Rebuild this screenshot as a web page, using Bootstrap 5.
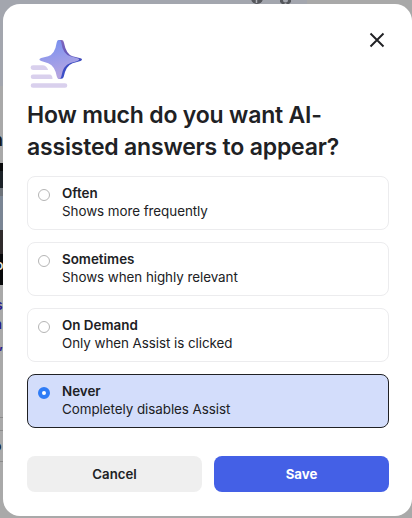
<!DOCTYPE html>
<html lang="en">
<head>
<meta charset="utf-8">
<meta name="viewport" content="width=device-width, initial-scale=1">
<title>AI-assisted answers</title>
<link href="https://cdn.jsdelivr.net/npm/bootstrap@5.3.0/dist/css/bootstrap.min.css" rel="stylesheet">
<style>
body{width:412px;height:518px;overflow:hidden;background:#a9a9a9;color:#202124;font-family:Inter,"Liberation Sans",sans-serif}
.page-behind{inset:0;z-index:0}
.dialog-panel{width:409px;height:512px;margin:4px 0 0 3px;padding:36px 23px 24px 24px;border-radius:17px;z-index:1}
.panel-head{height:60px}
.spark{width:56px;height:52px;display:block}
.close-btn{width:16px;height:16px;margin:-8px 4px 0 0;line-height:0}
.ask{font-size:23px;line-height:32px;font-weight:600;margin:-1px 0 13px;color:#202124;letter-spacing:-.19px}
.ask span{display:block;white-space:nowrap}
.options{gap:12px}
.option{height:54px;border:1px solid #ececee;border-radius:8px;padding:7px 10px;gap:12px}
.option.chosen{background:#d3ddfb;border-color:#202124}
.option .form-check-input{width:12px;height:12px;margin:5px 0 0;border:1px solid #b5b5b5;background-image:none;box-shadow:none;flex:none}
.option .form-check-input:checked{border:4px solid #2f7cf6;background:#fff}
.option-text{font-size:13.4px;line-height:18px;white-space:nowrap}
.option-text strong{display:block;font-weight:600}
.option-text span{display:block;letter-spacing:-.05px}
.actions{gap:12px;margin-top:28px}
.actions .btn{height:36px;border:0;border-radius:8px;padding:0;font-size:13.2px;font-weight:600;line-height:35px}
.btn-plain,.btn-plain:hover{background:#efefef;color:#202124}
.actions .btn-save,.btn-save:hover{background:#4460e6;color:#fff;font-weight:700}
</style>
<script src="https://cdn.jsdelivr.net/npm/bootstrap@5.3.0/dist/js/bootstrap.bundle.min.js"></script>
</head>
<body>
<svg class="page-behind position-absolute" width="412" height="518" aria-hidden="true">
  <rect width="412" height="518" fill="#a9a9a9"/>
  <rect width="307" height="86" fill="#a3a6ae"/>
  <circle cx="257" cy="-2" r="6" fill="#55575c"/><path d="M256.5 0v3" stroke="#b0b2b8" stroke-width="1.5"/>
  <path d="M280 0h3a2.500 2.500 0 0 0 5 0h3v2l-2 2h-2l-1.500-1-1.500 1h-2l-2-2z" fill="#55575c"/>
  <rect y="163" width="5" height="122" fill="#08090b"/>
  <rect y="171" width="5" height="17" fill="#1c2228"/>
  <rect y="188" width="5" height="8" fill="#6d737a"/>
  <rect y="196" width="5" height="34" fill="#7a8594"/>
  <rect y="230" width="5" height="24" fill="#302b2c"/>
  <g font-family="Inter, sans-serif" font-weight="600">
    <text x="-8" y="146" font-size="18" fill="#18191b">n</text>
    <text x="-5" y="270" font-size="14" fill="#ddd">o</text>
    <text x="-5" y="310" font-size="14" fill="#251a8c">s</text>
    <text x="-6" y="329" font-size="14" fill="#251a8c">a</text>
    <text x="-1" y="348" font-size="14" fill="#251a8c">,</text>
    <text x="-7" y="451" font-size="14" fill="#18191b">o</text>
  </g>
  <path d="M0 417.5h4M0 430.5h4M0 461.5h4" stroke="#8b8b8b"/>
</svg>
<main class="dialog-panel bg-white position-relative" role="dialog" aria-labelledby="ask">
  <div class="panel-head d-flex justify-content-between align-items-start">
    <svg class="spark" viewBox="27 40 56 52" aria-hidden="true">
      <defs>
        <linearGradient id="front" x1="0" y1="0" x2=".25" y2="1"><stop stop-color="#718df0"/><stop offset=".5" stop-color="#969bea"/><stop offset="1" stop-color="#b5a5e0"/></linearGradient>
        <linearGradient id="back" x1="0" y1="0" x2="0" y2="1"><stop stop-color="#8066bd"/><stop offset=".42" stop-color="#6356b8"/><stop offset=".52" stop-color="#3949be"/><stop offset="1" stop-color="#3d50c9"/></linearGradient>
      </defs>
      <path fill="#d9d0ed" d="M33 65.2h9.500q4 0 5.700 4.800H33a2.400 2.400 0 0 1 0-4.800zM33 74.500h16.500q3 0 3 4.500H33a2.250 2.250 0 0 1 0-4.500zM33 83.200h32a2.300 2.300 0 0 1 0 4.600H33a2.300 2.300 0 0 1 0-4.600z"/>
      <path fill="url(#back)" d="M58.500 40h3q2 0 2.400 2.400 2.200 11.600 8.600 13.800l8 2q1.500.5 1.500 1.400t-1.500 1.400l-8 2.200q-6.400 2.300-8.700 13.200-.5 2.400-2.400 2.400h-3z"/>
      <path fill="url(#front)" d="M59 40q2 0 2.300 2.400 1.400 11.300 9.200 13.900l6.400 1.700q2.400.7 2.400 1.600t-2.400 1.600l-6.400 1.900q-7.600 2.500-9.200 13.400-.4 2.400-2.300 2.400-1.800 0-2.200-2.400-1.900-10.700-8.600-13.300l-7-2.200q-1.800-.6-1.800-1.500t1.800-1.500l7-1.800q6.800-2.300 8.500-13.800Q57.100 40 59 40z"/>
    </svg>
    <button type="button" class="close-btn border-0 bg-transparent p-0" aria-label="Close">
      <svg width="16" height="16" viewBox="0 0 16 16"><path d="M1.500 1.500l13 13m0-13l-13 13" stroke="#202124" stroke-width="1.900" fill="none"/></svg>
    </button>
  </div>
  <h1 class="ask" id="ask"><span>How much do you want AI-</span><span>assisted answers to appear?</span></h1>
  <div class="options d-flex flex-column">
    <label class="option d-flex align-items-start"><input class="form-check-input" type="radio" name="freq"><span class="option-text"><strong>Often</strong><span>Shows more frequently</span></span></label>
    <label class="option d-flex align-items-start"><input class="form-check-input" type="radio" name="freq"><span class="option-text"><strong>Sometimes</strong><span>Shows when highly relevant</span></span></label>
    <label class="option d-flex align-items-start"><input class="form-check-input" type="radio" name="freq"><span class="option-text"><strong>On Demand</strong><span>Only when Assist is clicked</span></span></label>
    <label class="option chosen d-flex align-items-start"><input class="form-check-input" type="radio" name="freq" checked><span class="option-text"><strong>Never</strong><span>Completely disables Assist</span></span></label>
  </div>
  <div class="actions d-flex">
    <button type="button" class="btn btn-plain flex-fill w-50">Cancel</button>
    <button type="button" class="btn btn-save flex-fill w-50">Save</button>
  </div>
</main>
</body>
</html>
